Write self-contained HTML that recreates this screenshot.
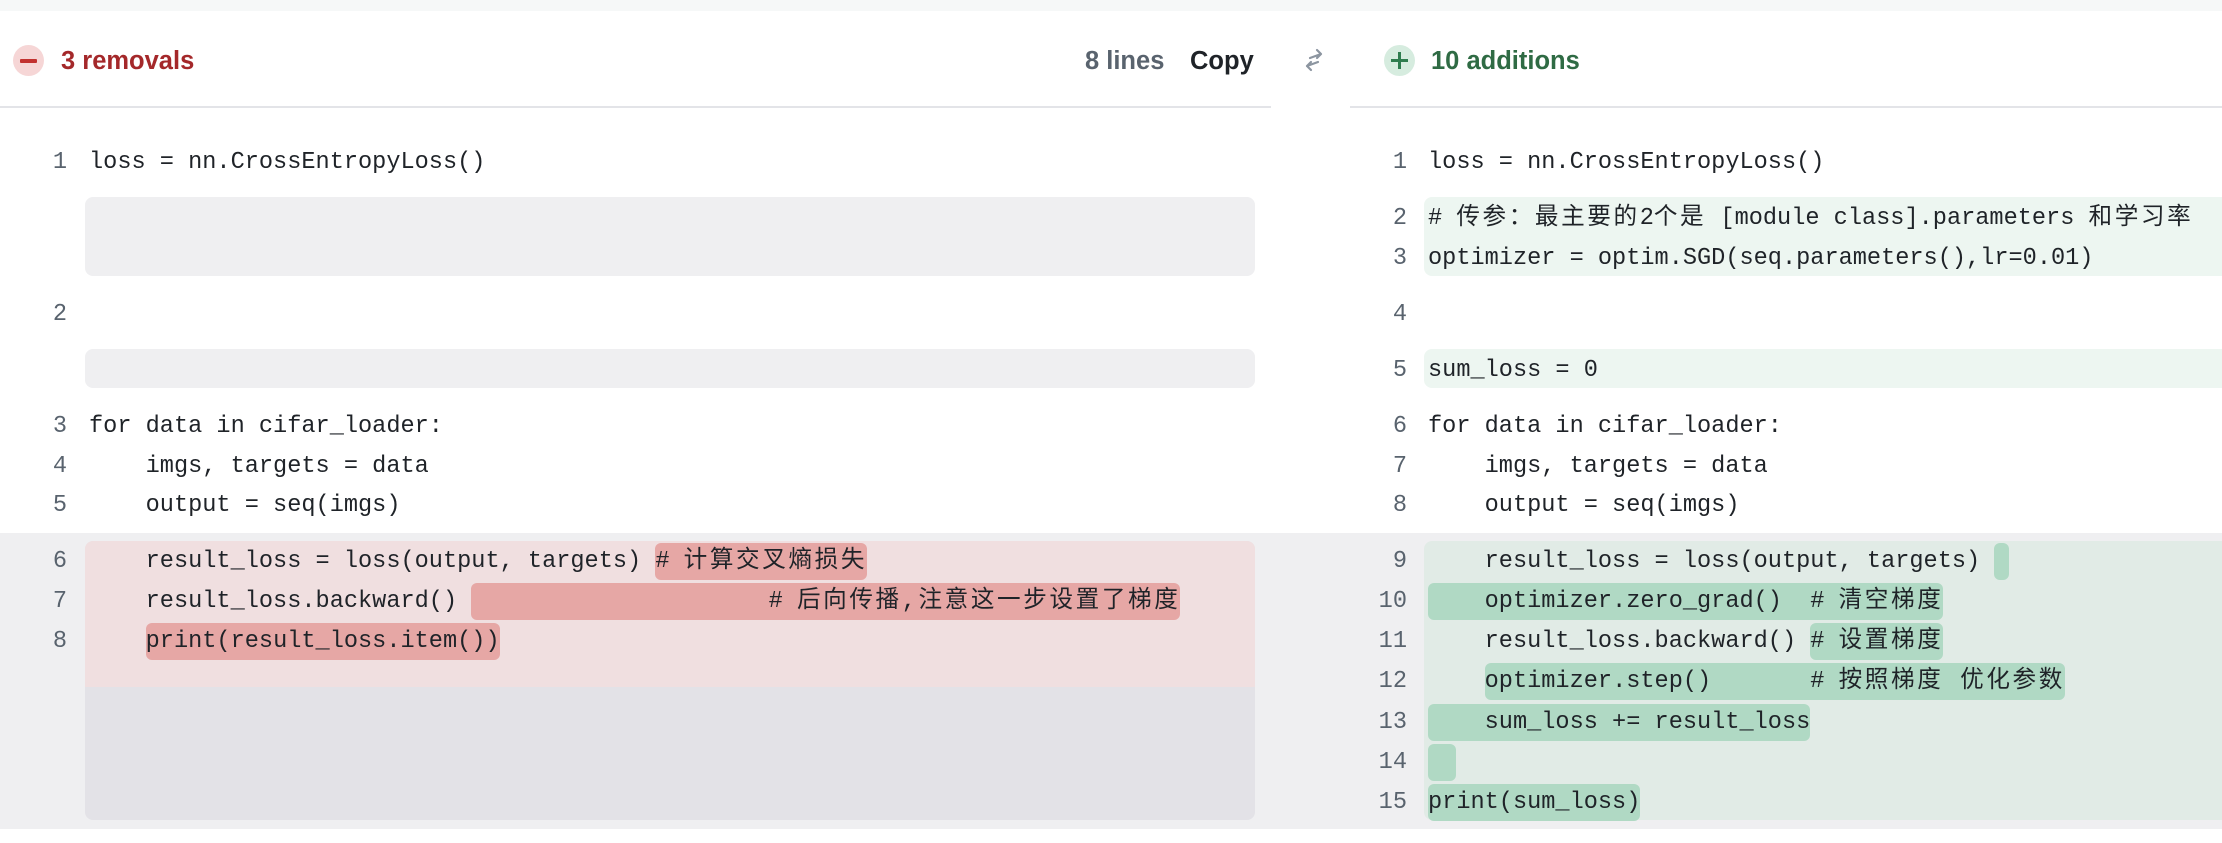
<!DOCTYPE html>
<html><head><meta charset="utf-8"><style>
body{margin:0;width:2222px;height:843px;background:#fff;position:relative;overflow:hidden;font-family:"Liberation Sans","Noto Sans CJK SC",sans-serif}
.a{position:absolute}
.code{position:absolute;white-space:pre;font-family:"Liberation Mono","Noto Sans CJK SC",monospace;font-size:23.6px;line-height:40px;color:#1f2328}
.n{position:absolute;width:40px;text-align:right;font-family:"Liberation Mono",monospace;font-size:23.6px;line-height:40px;color:#59636e}
.c{letter-spacing:2.6px}
.r{background:#e6a7a5;border-radius:6px;padding:5px 0}
.g{background:#b0d9c4;border-radius:6px;padding:5px 0}
.h{font-size:25.5px;font-weight:bold;line-height:34px}
</style></head><body>
<div class="a" style="left:0;top:0;width:2222px;height:11px;background:#f6f8f8"></div>
<!-- header -->
<div class="a" style="left:13px;top:45px;width:31px;height:31px;border-radius:50%;background:#f6d6d6"></div>
<div class="a" style="left:20px;top:59px;width:17px;height:4px;background:#c2312f;border-radius:1px"></div>
<div class="a h" style="left:61px;top:44px;color:#a4282a">3 removals</div>
<div class="a h" style="left:1085px;top:44px;color:#59636e">8 lines</div>
<div class="a h" style="left:1190px;top:44px;color:#1f2328">Copy</div>
<svg class="a" style="left:1300px;top:46px" width="28" height="28" viewBox="0 0 28 28" fill="none" stroke="#8c95a0" stroke-width="2.2" stroke-linecap="round" stroke-linejoin="round"><path d="M10 12 L21 8 M17 4 L21 8 L17 12"/><path d="M18 16 L7 20 M11 16 L7 20 L11 24"/></svg>
<div class="a" style="left:1384px;top:45px;width:31px;height:31px;border-radius:50%;background:#d6ecdf"></div>
<div class="a" style="left:1391px;top:59px;width:17px;height:3px;background:#2f7d4f"></div>
<div class="a" style="left:1398px;top:52px;width:3px;height:17px;background:#2f7d4f"></div>
<div class="a h" style="left:1431px;top:44px;color:#2f6b44">10 additions</div>
<div class="a" style="left:0;top:106px;width:1271px;height:2px;background:#e3e4e8"></div>
<div class="a" style="left:1350px;top:106px;width:872px;height:2px;background:#e3e4e8"></div>

<div class="a" style="left:85px;top:197px;width:1170px;height:79px;background:#efeff1;border-radius:8px"></div>
<div class="a" style="left:85px;top:349px;width:1170px;height:39px;background:#efeff1;border-radius:8px"></div>
<div class="a" style="left:1424px;top:197px;width:798px;height:79px;background:#edf6f1;border-radius:8px 0 0 8px"></div>
<div class="a" style="left:1424px;top:349px;width:798px;height:39px;background:#edf6f1;border-radius:8px 0 0 8px"></div>
<div class="a" style="left:0;top:533px;width:2222px;height:296px;background:#efeff1"></div>
<div class="a" style="left:85px;top:541px;width:1170px;height:279px;background:#e3e2e7;border-radius:8px"></div>
<div class="a" style="left:85px;top:541px;width:1170px;height:146px;background:#f0dfe0;border-radius:8px 8px 0 0"></div>
<div class="a" style="left:1424px;top:541px;width:798px;height:279px;background:#e1ebe6;border-radius:8px 0 0 8px"></div>

<!-- left lines -->
<div class="n" style="left:27px;top:143px">1</div><div class="code" style="left:89px;top:143px">loss = nn.CrossEntropyLoss()</div>
<div class="n" style="left:27px;top:295px">2</div>
<div class="n" style="left:27px;top:407px">3</div><div class="code" style="left:89px;top:407px">for data in cifar_loader:</div>
<div class="n" style="left:27px;top:447px">4</div><div class="code" style="left:89px;top:447px">    imgs, targets = data</div>
<div class="n" style="left:27px;top:486px">5</div><div class="code" style="left:89px;top:486px">    output = seq(imgs)</div>
<div class="n" style="left:27px;top:542px">6</div><div class="code" style="left:89px;top:542px">    result_loss = loss(output, targets) <span class="r"># <span class="c">计算交叉熵损失</span></span></div>
<div class="n" style="left:27px;top:582px">7</div><div class="code" style="left:89px;top:582px">    result_loss.backward() <span class="r">                     # <span class="c">后向传播,注意这一步设置了梯度</span></span></div>
<div class="n" style="left:27px;top:622px">8</div><div class="code" style="left:89px;top:622px">    <span class="r">print(result_loss.item())</span></div>

<!-- right lines -->
<div class="n" style="left:1367px;top:143px">1</div><div class="code" style="left:1428px;top:143px">loss = nn.CrossEntropyLoss()</div>
<div class="n" style="left:1367px;top:199px">2</div><div class="code" style="left:1428px;top:199px"># <span class="c">传参：最主要的</span>2<span class="c">个是</span> [module class].parameters <span class="c">和学习率</span></div>
<div class="n" style="left:1367px;top:239px">3</div><div class="code" style="left:1428px;top:239px">optimizer = optim.SGD(seq.parameters(),lr=0.01)</div>
<div class="n" style="left:1367px;top:295px">4</div>
<div class="n" style="left:1367px;top:351px">5</div><div class="code" style="left:1428px;top:351px">sum_loss = 0</div>
<div class="n" style="left:1367px;top:407px">6</div><div class="code" style="left:1428px;top:407px">for data in cifar_loader:</div>
<div class="n" style="left:1367px;top:447px">7</div><div class="code" style="left:1428px;top:447px">    imgs, targets = data</div>
<div class="n" style="left:1367px;top:486px">8</div><div class="code" style="left:1428px;top:486px">    output = seq(imgs)</div>
<div class="n" style="left:1367px;top:542px">9</div><div class="code" style="left:1428px;top:542px">    result_loss = loss(output, targets) <span class="g"> </span></div>
<div class="n" style="left:1367px;top:582px">10</div><div class="code" style="left:1428px;top:582px"><span class="g">    optimizer.zero_grad()  # <span class="c">清空梯度</span></span></div>
<div class="n" style="left:1367px;top:622px">11</div><div class="code" style="left:1428px;top:622px">    result_loss.backward() <span class="g"># <span class="c">设置梯度</span></span></div>
<div class="n" style="left:1367px;top:662px">12</div><div class="code" style="left:1428px;top:662px">    <span class="g">optimizer.step()       # <span class="c">按照梯度 优化参数</span></span></div>
<div class="n" style="left:1367px;top:703px">13</div><div class="code" style="left:1428px;top:703px"><span class="g">    sum_loss += result_loss</span></div>
<div class="n" style="left:1367px;top:743px">14</div><div class="code" style="left:1428px;top:743px"><span class="g">  </span></div>
<div class="n" style="left:1367px;top:783px">15</div><div class="code" style="left:1428px;top:783px"><span class="g">print(sum_loss)</span></div>
</body></html>
